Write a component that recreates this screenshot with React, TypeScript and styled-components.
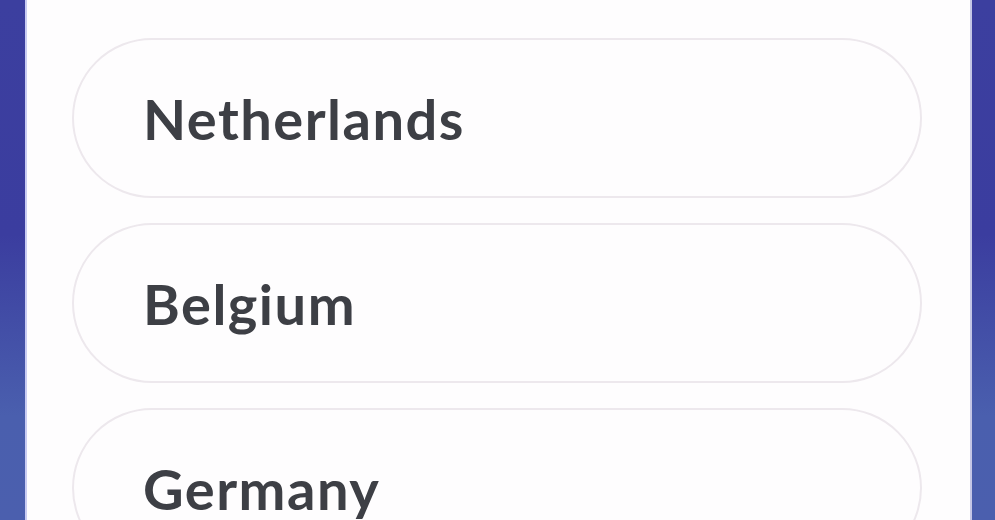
import React from "react";
import styled, { createGlobalStyle } from "styled-components";

const Global = createGlobalStyle`
  html, body { margin: 0; padding: 0; }
  body {
    width: 995px;
    height: 520px;
    overflow: hidden;
    background: linear-gradient(180deg, #3c3f9f 0%, #3b3d9f 45%, #4a5fae 80%, #4b5fae 100%);
    font-family: "Lato", "Liberation Sans", sans-serif;
  }
`;

const Stage = styled.div`
  display: flex;
  height: 520px;
  padding: 0 23px 0 25px;
  box-sizing: border-box;
`;

const Card = styled.div`
  flex: 1;
  height: 520px;
  background: #fefdfe;
  border-left: 2px solid #c9ccf3;
  border-right: 2px solid #c5c7e6;
  box-sizing: border-box;
  padding: 38px 48px 0 45px;
  display: flex;
  flex-direction: column;
  gap: 25px;
  overflow: hidden;
`;

const Option = styled.div`
  height: 160px;
  flex: none;
  border: 2px solid #ede8ed;
  border-radius: 80px;
  box-sizing: border-box;
  display: flex;
  align-items: center;
  padding-left: 69px;
  background: #fefdfe;
`;

const Label = styled.span`
  font-family: "Lato", "Liberation Sans", sans-serif;
  font-weight: 700;
  font-size: 56px;
  color: #3d3f45;
  letter-spacing: 1.5px;
`;

const countries = ["Netherlands", "Belgium", "Germany"];

export default function App() {
  return (
    <>
      <Global />
      <Stage>
        <Card>
          {countries.map((c) => (
            <Option key={c}>
              <Label>{c}</Label>
            </Option>
          ))}
        </Card>
      </Stage>
    </>
  );
}
